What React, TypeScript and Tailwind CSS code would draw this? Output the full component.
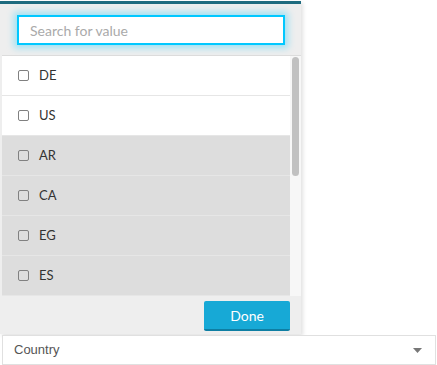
import React, { useState } from 'react';

const countries = [
    { code: 'DE', shaded: false },
    { code: 'US', shaded: false },
    { code: 'AR', shaded: true },
    { code: 'CA', shaded: true },
    { code: 'EG', shaded: true },
    { code: 'ES', shaded: true },
];

export default function App() {
    const [search, setSearch] = useState('');

    return (
        <div className="w-[437px] h-[365px] bg-white font-['Lato',sans-serif] text-[#333] flex flex-col">
            {/* dropdown panel */}
            <div className="w-[301px] h-[333px] mt-px bg-[#eeeeee] border-t-[3px] border-[#1e6b7f] shadow-[2px_2px_4px_rgba(0,0,0,0.12)] flex flex-col">
                <div className="h-[51px] flex items-start pl-[17px] pr-[16px] pt-[11px]">
                    <input
                        type="text"
                        placeholder="Search for value"
                        value={search}
                        onChange={(e) => setSearch(e.target.value)}
                        className="w-full h-[30px] bg-white border-2 border-[#00c8ff] shadow-[0_0_7px_3px_rgba(0,200,255,0.35)] px-[11px] text-[14px] text-[#333] placeholder:text-[#aaa] outline-none"
                    />
                </div>
                <div className="flex ml-[2px] h-[241px] border-t border-[#dcdcdc]">
                    <ul className="flex-1">
                        {countries.map((c) => (
                            <li
                                key={c.code}
                                className={`h-[40px] flex items-center gap-[10px] pl-[16px] border-b border-[#e6e6e6] text-[13px] ${c.shaded ? 'bg-[#dddddd]' : 'bg-white'}`}
                            >
                                <span className="w-[11px] h-[11px] border border-[#808080] rounded-[2px]" />
                                <span>{c.code}</span>
                            </li>
                        ))}
                    </ul>
                    <div className="w-[11px] bg-[#f7f7f7] pt-[1px] flex justify-center">
                        <div className="w-[7px] h-[119px] rounded-full bg-[#c1c1c1]" />
                    </div>
                </div>
                <div className="flex-1 flex justify-end items-start pt-[5px] pr-[11px]">
                    <button className="w-[86px] h-[30px] bg-[#17a9d6] border-b-2 border-[#0e7ea3] rounded-[2px] text-white text-[14px]">
                        Done
                    </button>
                </div>
            </div>
            {/* select field */}
            <div className="mt-[1px] ml-[2px] mr-px h-[30px] border border-[#e0e0e0] bg-white flex items-center justify-between pl-[11px] pr-[13px] text-[13px] text-[#555] font-['Liberation_Sans',sans-serif]">
                <span>Country</span>
                <svg width="9" height="5" viewBox="0 0 9 5">
                    <path d="M0 0h9L4.5 5z" fill="#777" />
                </svg>
            </div>
        </div>
    );
}
